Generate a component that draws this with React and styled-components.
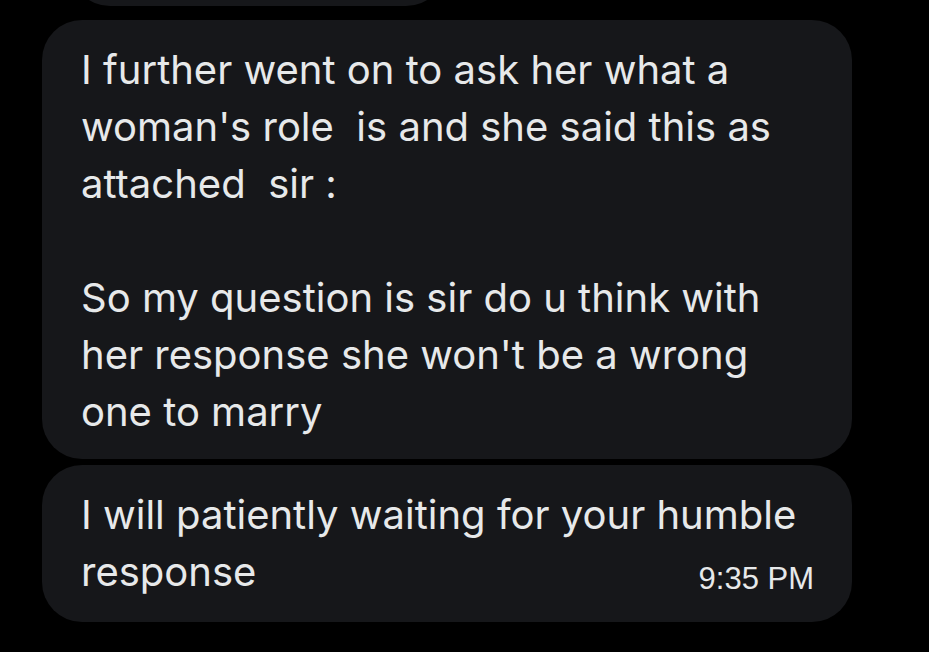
import React from "react";
import styled, {createGlobalStyle} from "styled-components";

const GlobalStyle = createGlobalStyle`
	html, body {
		margin: 0;
		padding: 0;
		background: #000000;
	}
	body {
		font-family: "Inter", "Liberation Sans", sans-serif;
	}
`;

export default function App() {
	return (
		<>
			<GlobalStyle />
			<Thread>
				{/* previous message, cut off at the top */}
				<Peek>
					<PeekBubble />
				</Peek>
				<Bubble $first>
					<Text>
						I further went on to ask her what a{"\n"}woman's role &nbsp;is and she said this as{"\n"}attached &nbsp;sir :{"\n\n"}So my question is sir do u think with{"\n"}her response she won't be a wrong{"\n"}one to marry
					</Text>
				</Bubble>
				<Bubble>
					<Text>
						I will patiently waiting for your humble{"\n"}response
					</Text>
					<Time>9:35 PM</Time>
				</Bubble>
			</Thread>
		</>
	);
}

const Thread = styled.div`
	width: 929px;
	height: 652px;
	overflow: hidden;
	display: flex;
	flex-direction: column;
	padding-left: 42px;
	box-sizing: border-box;
`;

const Peek = styled.div`
	height: 6px;
	overflow: hidden;
	margin-left: 28px;
	width: 376px;
`;

const PeekBubble = styled.div`
	height: 80px;
	margin-top: -74px;
	border-radius: 40px;
	background: #16171a;
`;

const Bubble = styled.div`
	position: relative;
	width: 810px;
	box-sizing: border-box;
	margin-top: ${(p) => (p.$first ? "14px" : "6px")};
	padding: ${(p) => (p.$first ? "21px 39px 19px" : "21px 39px 22px")};
	background: #16171a;
	border-radius: 40px;
`;

const Text = styled.div`
	white-space: pre-wrap;
	color: #e7e9ea;
	font-size: 40px;
	line-height: 57px;
	letter-spacing: 0;
`;

const Time = styled.span`
	position: absolute;
	right: 38px;
	bottom: 28px;
	color: #e7e9ea;
	font-size: 31px;
	line-height: 31px;
	font-family: "Liberation Sans", Arial, sans-serif;
`;
